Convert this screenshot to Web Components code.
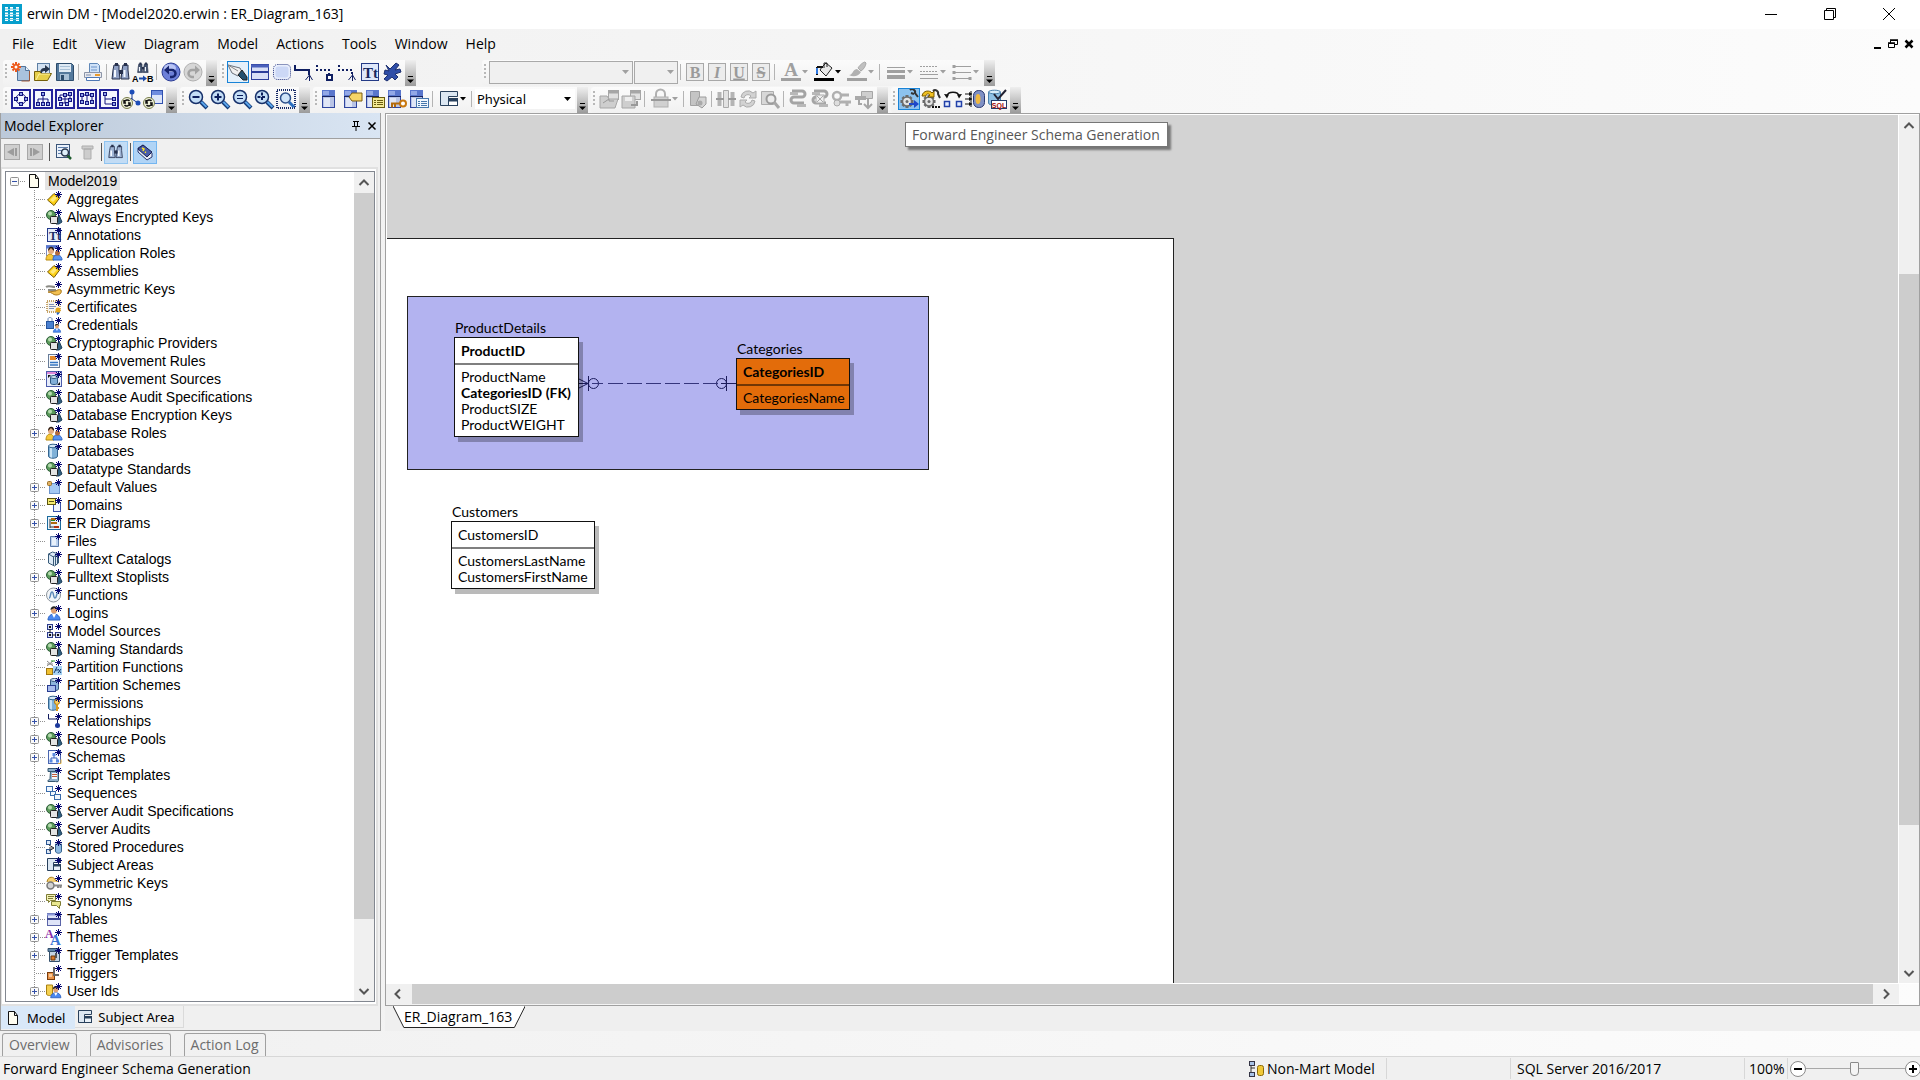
<!DOCTYPE html>
<html lang="en">
<head>
<meta charset="utf-8">
<title>erwin DM - [Model2020.erwin : ER_Diagram_163]</title>
<style>
  :root {
    --ui: "Open Sans", "Noto Sans", sans-serif;
    --tree: "Liberation Sans", sans-serif;
    --er: Lato, "Open Sans", sans-serif;
    --tab: "Noto Sans", sans-serif;
  }
  html, body { height: 100%; margin: 0; }
  body { font: 14px/20px var(--ui); color: #000; background: #f0f0f0; overflow: hidden; }
</style>
</head>
<body>
<erwin-app></erwin-app>
<script>
/* ---------- icon drawings ---------- */
const STAR = '<path d="M12.5 0v7M9 3.5h7M10 1l5 5M15 1l-5 5" stroke="#06066e" fill="none"/>';
const SHAPES = '<circle cx="5" cy="6" r="4.5" fill="#5a9a5a" stroke="#2c5a38"/><circle cx="4" cy="4.500" r="2" fill="#b5dcae"/><path d="M13 6l3 7-3 2h-3z" fill="#2f5f80" stroke="#1c3c58"/><rect x="4.500" y="7.500" width="7" height="7" rx="1" fill="#e4e4e4" stroke="#222"/>';
const TAG = '<path d="M1.500 9L8 2.500l6 4L8 14.500z" fill="#fcd116" stroke="#7a5a00"/><path d="M4 9l4-4 3 2-4 4z" fill="#ffe97a"/>';
const PERSON = '<path d="M2 15c0-4 3-6 6-6s6 2 6 6z" fill="#4a88f0" stroke="#2a60c0"/><path d="M6 9l2 4 2-4z" fill="#fff"/><circle cx="8" cy="5.500" r="3" fill="#e0a070"/><path d="M4.500 5c0-5 7-5 7 0l-3-2z" fill="#222"/>';
const PEOPLE = '<path d="M0 15c0-4 2-6 4-6s4 2 4 6z" fill="#f7c93a" stroke="#b88a10"/><path d="M7 15c0-4 2-5 4-5s5 1 5 5z" fill="#5b93ee" stroke="#2b62c4"/><circle cx="5" cy="6" r="3" fill="#e5ad80"/><path d="M2 6c0-6 7-5 6 0L5 3z" fill="#2b1a10"/><circle cx="11.500" cy="8" r="2.500" fill="#b36a3c"/>';
const CYL = '<path d="M2.500 3v10c0 3 9 3 9 0V3z" fill="#7fb1d8" stroke="#34648e"/><path d="M4 4v10l2 .8V5z" fill="#c8e2f4"/><ellipse cx="7" cy="3" rx="4.500" ry="1.800" fill="#d4e8f6" stroke="#34648e"/>';
const SQ = inner => `<rect x="1" y="1" width="18" height="18" fill="#f4f7ff" stroke="#23239a" stroke-width="2"/><g fill="#fff" stroke="#14147e">${inner}</g>`;
const node = (x, y) => `<rect x="${x}.5" y="${y}.5" width="3" height="3" fill="#8ea2ea"/>`;
const LENS = inner => `<path d="M13 13l6 6" stroke="#123a78" stroke-width="4"/><path d="M13 12.500l5.500 5.500" stroke="#5aa4ea" stroke-width="2"/><circle cx="8" cy="8" r="6.500" fill="#c4def6" stroke="#16306a" stroke-width="1.500"/><g stroke="#0c1e5c" fill="none" stroke-width="2">${inner}</g>`;
const TBL = '<rect x="1.500" y="1.500" width="12" height="17" fill="#b9c4e6" stroke="#2f459e"/><path d="M3 9h6v9H3z" fill="#e0e6f6"/><rect x="1" y="1" width="13" height="6" fill="#5a76cc"/><path d="M1 7.500h13" stroke="#17235e"/><path d="M2 2h6v4H2z" fill="#93a8e6"/>';
const STAMP = '<circle cx="6" cy="14" r="5.500" fill="#eef0d8" stroke="#777c4a"/><path d="M3.500 13a3 3 0 0 1 5-1M8.500 15a3 3 0 0 1-5 1M3 11v3h2M9 17v-3H7" stroke="#111" fill="none" stroke-width="1.500"/>';
const GLASSES = c => `<g fill="${c}" stroke="#26304c"><path d="M3 3h5v5l1 9H1l1-9z"/><path d="M12 3h5v5l1 9h-8l1-9z"/></g><path d="M8 8h4v4H8z" fill="#26304c"/><path d="M4 1h3v3H4zM13 1h3v3h-3z" fill="#26304c"/><path d="M4 8v7M13.500 8v7" stroke="#f4f8ff" stroke-width="2"/>`;
const GEAR = c => `<path d="M8 6v13M1.500 12.500h13M3.500 8l9 9M12.500 8l-9 9" stroke="${c}" stroke-width="3"/><circle cx="8" cy="12.500" r="4.500" fill="#e4e4e4" stroke="${c}" stroke-width="1.500"/><circle cx="8" cy="12.500" r="1.500" fill="${c}"/>`;
const letter = (t, extra = '') => `<rect x="1.500" y="1.500" width="17" height="17" fill="#ececec" stroke="#a8a8a8"/><text x="10" y="15.500" text-anchor="middle" font-family="Liberation Serif" font-size="16" font-weight="bold" fill="#9a9a9a" ${extra}>${t}</text>`;
const GTBL = (x, y) => `<rect x="${x}.5" y="${y}.5" width="10" height="9" fill="#e0e0e0" stroke="#a6a6a6"/><path d="M${x} ${y + 2}h11" stroke="#a6a6a6" stroke-width="3"/>`;
const CHAIN = '<path d="M4 2h10a3 3 0 0 1 0 6H6a3 3 0 0 0 0 6h10" stroke="#a4a4a4" stroke-width="3" fill="none"/><path d="M2 4.500h8M9 16.500h9" stroke="#b8b8b8" stroke-width="3"/>';
const SUBJ = '<path d="M1.500 13.500v-12h13v4h-7v8z" fill="#dce7f2" stroke="#28405c"/><rect x="7.500" y="7.500" width="7" height="6" fill="#eaf1f8" stroke="#28405c"/><path d="M7 8.500h8" stroke="#28405c" stroke-width="2"/>';

const ICONS = {
  logo: [20, '<rect width="20" height="20" fill="#079fcc"/><g fill="#fff"><path d="M3 5h14v1H3zM3 10h14v1H3zM3 15h14v1H3z" opacity=".75"/><path d="M3 3h3v4H3zM8 3h3v4H8zM14 3h3v4h-3zM3 8.500h3v4H3zM8 8.500h3v4H8zM14 8.500h3v4h-3zM3 14h3v3H3zM8 14h3v3H8zM14 14h3v3h-3z"/></g><path d="M3 5h14M3 10.500h14M3 15.500h14" stroke="#079fcc" stroke-width=".6"/>'],
  neu: [20, '<path d="M6.500 4.500h8l4 4v10h-12z" fill="#a9c3de" stroke="#51749c"/><path d="M14.500 4.500v4h4" fill="#e8f1fa" stroke="#51749c"/><path d="M18.500 9v10h-8" stroke="#a05a3c" fill="none"/><path d="M5 0v10M0 5h10M1.500 1.500l7 7M8.500 1.500l-7 7" stroke="#ee5a1c" stroke-width="2"/><circle cx="5" cy="5" r="1.500" fill="#fff"/>'],
  open: [20, '<rect x="4.500" y="1.500" width="12" height="12" fill="#d3e2f2" stroke="#5e7fa4"/><path d="M7 12c0-5 2-6 5-6V3l5 4-5 4V9c-3 0-3 1-3 3z" fill="#27364c"/><path d="M1.500 10v8.500h13l4-7H8l-1-2H1.500z" fill="#e6cf4a" stroke="#75600a"/><path d="M3 18l3-6h11" stroke="#fff3a0" fill="none"/>'],
  save: [20, '<path d="M1.500 1.500h15l2 2v15h-17z" fill="#54799c" stroke="#2d4c6c"/><path d="M4 2h12v8H4z" fill="#dfeaf4"/><path d="M5 12h9v6H5z" fill="#a8c0d6"/><path d="M6 13h3v5H6z" fill="#2d4c6c"/><path d="M5 4.500h10M5 7.500h10" stroke="#a8c0d6"/>'],
  print: [20, '<path d="M6.500 1.500h8l2 2v8h-10z" fill="#cfe2f8" stroke="#6088b8"/><path d="M8 5h6M8 8h6" stroke="#6a92c8"/><path d="M1.500 10.500h17v5h-17z" fill="#e9eaee" stroke="#8c95a8"/><path d="M3.500 15.500h13v3h-13z" fill="#fff" stroke="#4f78b4"/><path d="M12 13h5" stroke="#e89a2c" stroke-width="2"/><path d="M3 13h5" stroke="#7c8cab"/>'],
  find: [20, GLASSES('#8fa0c4')],
  replace: [20, '<g transform="translate(4 0) scale(.62)">' + GLASSES('#42526e') + '</g><g font-family="Liberation Sans" font-size="9" font-weight="bold" fill="#000"><text x="-1" y="20">A</text><text x="14" y="20">B</text></g><path d="M6 16.500h5" stroke="#1c4aa8" stroke-width="2"/><path d="M10 13.500l4 3-4 3z" fill="#1c4aa8"/>'],
  undo: [20, '<circle cx="10" cy="10" r="9" fill="#6d80d8" stroke="#2b3c94"/><ellipse cx="9" cy="6" rx="6" ry="4" fill="#b9c4f4"/><path d="M5 8h6a3.500 3.500 0 0 1 0 7H9" stroke="#17246e" stroke-width="2.500" fill="none"/><path d="M8 3.500v9L3 8z" fill="#17246e"/>'],
  redo: [20, '<circle cx="10" cy="10" r="9" fill="#d6d6d6" stroke="#b0b0b0"/><path d="M15 8H9a3.500 3.500 0 0 0 0 7h2" stroke="#a2a2a2" stroke-width="2.500" fill="none"/><path d="M12 3.500v9L17 8z" fill="#a2a2a2"/>'],
  pointer: [20, '<path d="M0 3l5 7 7 5 1-6z" fill="#8d98a8"/><path d="M0 3l12 3 2 4-4 4-6-3z" fill="#f0f0f0" stroke="#6a707a"/><path d="M0 3l10 6" stroke="#888"/><path d="M10 13l4-5 5 7v3h-4z" fill="#24506f" stroke="#222"/>'],
  entity: [20, '<rect x="1.500" y="2.500" width="17" height="15" fill="#d8dff6" stroke="#2c3e9a"/><path d="M1 4h18" stroke="#4a60bc" stroke-width="3"/><path d="M1 10h18" stroke="#2c3e9a" stroke-width="2"/>'],
  view: [20, '<rect x="1.500" y="2.500" width="17" height="15" rx="4" fill="#e8eefc" stroke="#24347e" stroke-dasharray="1 1"/><rect x="3.500" y="4.500" width="13" height="11" rx="3" fill="#ccd8f6"/>'],
  rel1: [20, '<path d="M1 3v5h14v5" stroke="#101f62" stroke-width="2" fill="none"/><path d="M15.500 12v7M15.500 13l-4 5M15.500 13l3 5" stroke="#101f62" fill="none"/>'],
  rel2: [20, '<path d="M1 3v5h12v5" stroke="#101f62" stroke-width="2" stroke-dasharray="2 2" fill="none"/><rect x="11" y="13" width="5" height="5" fill="#fff" stroke="#101f62" stroke-width="2"/>'],
  rel3: [20, '<path d="M1 3v5h13v5" stroke="#101f62" stroke-width="2" stroke-dasharray="2 2" fill="none"/><path d="M14.500 12v7M14.500 13l-4 5M14.500 13l3 5" stroke="#101f62" fill="none"/>'],
  text: [20, '<rect x="1.500" y="1.500" width="17" height="17" fill="#dfe8fa" stroke="#243a86"/><text x="3" y="15.500" font-family="Liberation Serif" font-size="15" font-weight="bold" fill="#16275e">Tt</text>'],
  ink: [20, '<path d="M4 3l4 4 6-6 3 2-4 5 5-1 1 3-6 2 3 3-3 3-3-3-5 4-3-2 4-4-4-1 1-4 4 1z" fill="#2f4ea8" stroke="#1c3070"/>'],
  bold: [20, letter('B')], ital: [20, letter('I', 'font-style="italic"')], under: [20, letter('U', 'text-decoration="underline"')], strike: [20, letter('S', 'text-decoration="line-through"')],
  fontc: [20, '<text x="10" y="14" text-anchor="middle" font-family="Liberation Serif" font-size="19" font-weight="bold" fill="#a0a0a0">A</text><path d="M0 17.500h20" stroke="#a0a0a0" stroke-width="3"/>'],
  fill: [20, '<path d="M8 5l4-4 6 5-6 8-6-6z" fill="#e8e8e8" stroke="#222"/><path d="M10 6V1h3v4" fill="none" stroke="#222"/><path d="M3 5h6M3 5v8" stroke="#111" stroke-width="2"/><path d="M3 6v6" stroke="#2f78e0" stroke-width="2"/><path d="M0 17.500h20" stroke="#000" stroke-width="3"/>'],
  brush: [20, '<path d="M18 0c-2 0-6 4-7 6l3 3c2-1 5-5 5-8z" fill="#c0c0c0" stroke="#aaa"/><path d="M2 13c4 0 3-5 8-6l4 3c-3 5-8 5-12 3z" fill="#b0b0b0"/><path d="M0 17.500h20" stroke="#a0a0a0" stroke-width="3"/>'],
  lw: [20, '<path d="M1 5.500h18" stroke="#a0a0a0"/><path d="M1 9.500h18" stroke="#a0a0a0" stroke-width="3"/><path d="M1 15h18" stroke="#a0a0a0" stroke-width="4"/>'],
  ls: [20, '<path d="M1 4.500h18M1 9.500h18" stroke="#a0a0a0" stroke-dasharray="2 1"/><path d="M1 12.500h18M1 16.500h18" stroke="#a0a0a0"/>'],
  lc: [20, '<path d="M2 4.500h17M2 10.500h17M2 16.500h17" stroke="#a0a0a0"/><path d="M2 3v3M2 9v3M2 15v3M18 15v3" stroke="#a0a0a0" stroke-width="3"/>'],
  lay1: [20, SQ('<circle cx="10" cy="10" r="5" fill="none"/>' + node(8, 3) + node(8, 13) + node(3, 8) + node(13, 8))],
  lay2: [20, SQ('<path d="M10 6v4M5 14v-4h10v4M10 10v4" fill="none"/>' + node(8, 3) + node(3, 13) + node(8, 13) + node(13, 13))],
  lay3: [20, SQ('<path d="M5 6h10v5M10 6v8H5M5 6v4h10" fill="none"/>' + node(8, 4) + node(3, 8) + node(13, 3) + node(13, 9) + node(4, 13) + node(10, 13))],
  lay4: [20, SQ('<path d="M5 12V6h10v6M10 6v6" fill="none"/>' + node(3, 4) + node(8, 3) + node(13, 4) + node(3, 11) + node(8, 12) + node(13, 11))],
  lay5: [20, SQ('<path d="M6 6v9h8M6 10h8" fill="none"/>' + node(4, 3) + node(13, 8) + node(13, 13))],
  auto1: [20, '<path d="M11 3v7l6 4M11 9l-5 4" stroke="#1b3a90" fill="none"/><circle cx="11" cy="3" r="2.500" fill="#1d4db8"/><circle cx="17" cy="14" r="2.500" fill="#1d4db8"/>' + STAMP],
  auto2: [20, '<rect x="8.500" y="1.500" width="11" height="13" fill="#dde5fa" stroke="#3050ae"/><path d="M9 4h10" stroke="#6f8ce0" stroke-width="4"/>' + STAMP],
  zout: [20, LENS('<path d="M4.500 8h7"/>')], zin: [20, LENS('<path d="M4.500 8h7M8 4.500v7"/>')],
  zeq: [20, LENS('<path d="M5 6.500h6M5 9.500h6" stroke-width="1"/>')], zfit: [20, LENS('<path d="M3.500 8h9M8 3.500v9" stroke-dasharray="3 1.500"/>')],
  zsel: [20, '<rect x="1" y="1" width="18" height="18" fill="none" stroke="#1a2c68" stroke-width="2" stroke-dasharray="1 1"/><path d="M13 13l5 5" stroke="#2a6ec0" stroke-width="3"/><circle cx="9.500" cy="9" r="5" fill="#cfe4f8" stroke="#2c4f8a" stroke-width="1.500"/>'],
  t1: [20, TBL], t2: [20, TBL + '<path d="M6 8l3-4h10v8H9z" fill="#f6d568" stroke="#7c5c10"/>'],
  t3: [20, TBL + '<rect x="7.500" y="8.500" width="12" height="10" fill="#f4ea94" stroke="#6a5c10"/><path d="M9 11.500h2M12 11.500h6M9 13.500h2M12 13.500h6M9 15.500h2M12 15.500h6" stroke="#6a5c10"/>'],
  t4: [20, TBL + '<circle cx="16" cy="14.500" r="3" fill="#fff" stroke="#c87810" stroke-width="2"/><path d="M13 14.500H5v4M8 15v3" stroke="#b36a0c" stroke-width="2" fill="none"/>'],
  t5: [20, TBL + '<rect x="7.500" y="9.500" width="12" height="9" fill="#f2f8ff" stroke="#4878ac"/><path d="M9 12.500h2M12 12.500h6M9 14.500h2M12 14.500h6M9 16.500h2M12 16.500h6" stroke="#4878ac"/>'],
  subj: [20, '<path d="M1.500 16.500v-14h17v5h-9v9z" fill="#dce7f2" stroke="#28405c"/><rect x="9.500" y="9.500" width="9" height="7" fill="#fff" stroke="#28405c"/><path d="M9 11h10" stroke="#28405c" stroke-width="3"/>'],
  g1: [20, GTBL(9, 1) + '<path d="M1 7h7l2 3h9l-3 9H1z" fill="#cecece" stroke="#a6a6a6"/><path d="M4 14l6-4v2h5" stroke="#999" fill="none"/>'],
  g2: [20, GTBL(9, 1) + '<path d="M1 7h13v12H1z" fill="#cecece" stroke="#a6a6a6"/><path d="M16 12v4h-6" stroke="#999" fill="none" stroke-width="2"/><path d="M4 8h7v4H4z" fill="#eee"/>'],
  lock: [20, '<path d="M5 8V5a4 4 0 0 1 9 0v3" fill="none" stroke="#b0b0b0" stroke-width="2"/><rect x="3" y="8" width="14" height="10" fill="#d0d0d0" stroke="#b0b0b0"/><path d="M0 11h20" stroke="#999" stroke-width="2"/>'],
  g3: [20, '<path d="M2.500 2.500h9v14h-9z" fill="#c4c4c4" stroke="#a2a2a2"/><path d="M11 8h7v7l-4 4-6-4z" fill="#d4d4d4" stroke="#9c9c9c"/><circle cx="12" cy="14" r="2.500" fill="#aaa"/>'],
  g4: [20, '<path d="M7.500 1.500h5v17h-5z" fill="#e2e2e2" stroke="#aaa"/><path d="M3.500 3v14M16.500 3v14" stroke="#b4b4b4" stroke-width="4"/><path d="M0 10h8M12 10h8" stroke="#999" stroke-width="2"/>'],
  g5: [20, '<path d="M3 8a7 7 0 0 1 12-4l3-2v7h-7l2-2a4 4 0 0 0-7 2zM17 12a7 7 0 0 1-12 4l-3 2v-7h7l-2 2a4 4 0 0 0 7-2z" fill="#d2d2d2" stroke="#acacac"/>'],
  g6: [20, '<path d="M1.500 2.500h12v13h-12z" fill="#d8d8d8" stroke="#adadad"/><circle cx="11" cy="10" r="4.500" fill="#ececec" stroke="#9c9c9c" stroke-width="2"/><path d="M14 13l5 6" stroke="#a8a8a8" stroke-width="3"/>'],
  c1: [20, CHAIN], c2: [20, CHAIN + '<rect x="6" y="6" width="8" height="8" fill="#eee" stroke="#aaa"/><path d="M7 7l6 6M13 7l-6 6" stroke="#aaa"/>'],
  c3: [20, '<circle cx="5" cy="7" r="4" fill="none" stroke="#b0b0b0" stroke-width="2.500"/><path d="M9 6h8M8 13h11M15 13v4" stroke="#b0b0b0" stroke-width="3"/><circle cx="5" cy="14" r="3" fill="#ddd" stroke="#aaa"/>'],
  c4: [20, '<path d="M7.500 2.500h11v7h-11z" fill="#cfcfcf" stroke="#a6a6a6"/><path d="M1 7h11v4H1z" fill="#aaa"/><path d="M5 11v4h3M14 9v9M10 15l4 4 4-4" stroke="#a6a6a6" stroke-width="2" fill="none"/>'],
  fe: [20, GEAR('#6b6b6b') + '<path d="M11 1a3 3 0 0 1 5 3l3 4M12 4l3 1" stroke="#333" stroke-width="2" fill="none"/><path d="M10 14h5v-3l5 4-5 4v-3h-5z" fill="#1e48c8"/>'],
  re: [20, GEAR('#6b6b6b') + '<path d="M1 7c1-6 8-6 10-3l2-2v6H7l2-2c-2-2-4-1-4 1z" fill="#f0c020" stroke="#7a5a00"/><path d="M12 2a3 3 0 0 1 5 3l2 4" stroke="#333" stroke-width="2" fill="none"/><path d="M11 17h2v2h-2zM14 17h2v2h-2zM17 17h2v2h-2z" fill="#111"/>'],
  cmp: [20, '<path d="M4 7c1-5 11-5 12 0" stroke="#111" stroke-width="1.500" fill="none"/><path d="M1 5l5 .5-2 4zM19 5l-5 .5 2 4z" fill="#111"/><rect x="1.500" y="12.500" width="5" height="5" fill="#e3ecff" stroke="#2140a8" stroke-width="1.500"/><rect x="13.500" y="12.500" width="5" height="5" fill="#e3ecff" stroke="#2140a8" stroke-width="1.500"/>'],
  bridge: [20, '<path d="M0 5h7M0 10h7M0 15h7M6 2v16" stroke="#111"/><path d="M4 3l3 2-3 2zM4 8l3 2-3 2zM4 13l3 2-3 2z" fill="#111"/><rect x="8.500" y="1.500" width="11" height="17" rx="5" fill="#7f90c4" stroke="#2a3870"/><ellipse cx="13" cy="10" rx="2.500" ry="5" fill="#f0b840"/>'],
  sql: [20, '<path d="M1.500 3v11c0 3 12 3 12 0V3z" fill="#8fc0e4" stroke="#4a80ac"/><ellipse cx="7.500" cy="3" rx="6" ry="1.800" fill="#d8ecf9" stroke="#4a80ac"/><path d="M7 5l4 5 8-9" stroke="#223" stroke-width="2" fill="none"/><rect x="4.500" y="11.500" width="15" height="8" fill="#fff" stroke="#223a6a"/><text x="12" y="18.500" text-anchor="middle" font-family="Liberation Sans" font-size="7" font-weight="bold" fill="#a00808">SQL</text>'],
  back: [16, '<rect x=".5" y=".5" width="15" height="15" fill="#cfcfcf" stroke="#a8a8a8"/><path d="M10 4v8L3 8zM11 4h2v8h-2z" fill="#9c9c9c"/>'],
  fwd: [16, '<rect x=".5" y=".5" width="15" height="15" fill="#cfcfcf" stroke="#a8a8a8"/><path d="M6 4v8l7-4zM3 4h2v8H3z" fill="#9c9c9c"/>'],
  props: [16, '<rect x=".5" y=".5" width="13" height="13" fill="#eaf1fb" stroke="#3a5478"/><path d="M2 3.500h10M2 6.500h4M2 9.500h3" stroke="#5c7ca8"/><path d="M11 11l4 4" stroke="#1c5a2c" stroke-width="2.500"/><circle cx="9" cy="8.500" r="3.500" fill="#dff0fb" stroke="#27364c" stroke-width="1.500"/>'],
  del: [16, '<path d="M3 2h11v3H3zM5 5h7v10H5z" fill="#cdcdcd" stroke="#adadad"/>'],
  find16: [16, '<g transform="scale(.8)">' + GLASSES('#9fb4d4') + '</g>'],
  book: [16, '<path d="M1 8V4l5-3 9 8v4l-5 3z" fill="#e8ecf8" stroke="#27346e"/><path d="M1 5l5-4 9 7-5 5z" fill="#4a5ca8" stroke="#1a2450"/><path d="M5 4l2 1-1 2M8 8l1 .6" stroke="#ffe620" stroke-width="1.500" fill="none"/>'],
  pin: [10, '<path d="M2 .5h6M3.500 0v5M6.500 0v5M1 5.500h8M5 6v4" stroke="#000" fill="none"/>'],
  close: [10, '<path d="M1.500 1.500l7 7M8.500 1.500l-7 7" stroke="#000" stroke-width="1.500"/>'],
  wmin: [14, '<path d="M1 7.500h12" stroke="#000"/>'],
  wmax: [14, '<path d="M1.500 3.500h9v9h-9zM3.500 3V1.500h9v9H11" stroke="#000" fill="none"/>'],
  wclose: [14, '<path d="M1 1l12 12M13 1L1 13" stroke="#000"/>'],
  mmin: [10, '<path d="M2 9h7" stroke="#000" stroke-width="2"/>'],
  mmax: [10, '<path d="M.5 4.500h6v4h-6zM2.500 4V1.500h7v4H7" stroke="#000" fill="none"/><path d="M0 4h7M2 1h8" stroke="#000" stroke-width="1.500"/>'],
  mclose: [10, '<path d="M1.500 1.500l7 7M8.500 1.500l-7 7" stroke="#000" stroke-width="2.500"/>'],
  mart: [18, '<path d="M3 5v8h4" stroke="#333" fill="none"/><rect x="1.500" y="1.500" width="5" height="4" fill="#a8c4e8" stroke="#334"/><rect x="1.500" y="12.500" width="5" height="4" fill="#a8c4e8" stroke="#334"/><path d="M3 8h4" stroke="#333"/><rect x="9.500" y="5.500" width="6" height="10" rx="2" fill="#f0c838" stroke="#8a6a08"/>'],
  doc: [16, '<path d="M3.500 1.500h6l3 4v9h-9z" fill="#fffdf0" stroke="#111"/><path d="M9.500 1.500v4h3" fill="none" stroke="#111"/>'],
  tag: [16, TAG + STAR], shapes: [16, SHAPES + STAR],
  annot: [16, '<rect x="1.500" y="1.500" width="13" height="13" fill="#e4ecfa" stroke="#22398a"/><text x="3" y="13" font-family="Liberation Serif" font-size="12" font-weight="bold" fill="#1a2c66">Tt</text>' + STAR],
  roles: [16, '<rect x=".5" y=".5" width="11" height="10" fill="#fff" stroke="#7c8cc4"/><path d="M0 2h11" stroke="#5576d0" stroke-width="3"/>' + PEOPLE + STAR],
  people: [16, PEOPLE + STAR],
  akey: [16, '<path d="M0 6c3-2 5 0 9 0M2 9h8" stroke="#8a8a84" stroke-width="2"/><path d="M2 11c4 0 5 3 8 3 4 0 6-2 5-5-2-1-4 0-5 1z" fill="#f2c052" stroke="#a9781c"/>' + STAR],
  cert: [16, '<rect x="1" y="2" width="13" height="11" fill="#f8f4ea" stroke="#c6a468" stroke-width="2" stroke-dasharray="1 1"/><path d="M3 5.500h5M3 7.500h7M3 9.500h5" stroke="#7f90b8"/><path d="M10 11l1 5 2-1 1-4z" fill="#2a68c8"/><circle cx="12" cy="11" r="2.500" fill="#e8a818"/>' + STAR],
  cred: [16, '<path d="M2 4V2c0-2 4-2 4 0v2" stroke="#6a86b4" fill="none"/><rect x=".5" y="4.500" width="7" height="7" fill="#4a80d0" stroke="#24539c"/><g transform="translate(6 6) scale(.62)">' + PERSON + '</g>' + STAR],
  rules: [16, '<rect x="2.500" y="1.500" width="11" height="13" fill="#f4f8fc" stroke="#687c98"/><path d="M4 3h6v4H4z" fill="#e58a2a"/><path d="M4 9.500h8M4 12h8" stroke="#3474c0" stroke-width="1.500"/>' + STAR],
  dms: [16, '<rect x=".5" y=".5" width="15" height="15" fill="#e6ecfa" stroke="#4c5cac"/><path d="M1 2h10" stroke="#e088d8" stroke-width="2"/><path d="M4.500 6v6c0 2 7 2 7 0V6z" fill="#84b0d8" stroke="#2f5880"/><ellipse cx="8" cy="6" rx="3.500" ry="1.500" fill="#d4e6f4" stroke="#2f5880"/><path d="M2 7V4h3zM14 11v3h-3z" fill="#111"/>' + STAR],
  db: [16, CYL + STAR],
  defv: [16, '<rect x="3.500" y="4.500" width="10" height="10" fill="#a4c8f2" stroke="#6b94cc"/><rect x="1.500" y="2.500" width="4" height="4" rx="1" fill="#e0b060" stroke="#9a7028"/>' + STAR],
  dom: [16, '<rect x="7.500" y="5.500" width="7" height="9" fill="#eef3fd" stroke="#3a52aa"/><rect x="1.500" y="1.500" width="8" height="6" fill="#f4ea70" stroke="#5c5410"/><path d="M3 4.500h5" stroke="#5c5410"/>' + STAR],
  erd: [16, '<rect x="1.500" y="1.500" width="13" height="13" fill="#e9f3fb" stroke="#1a6a9c"/><path d="M4 4v9M4 12h5" stroke="#333"/><path d="M5 3h5v2H5zM5 7h6v2H5z" fill="#b06a10"/><path d="M8 11h5v2H8z" fill="#b03010"/><path d="M5 5h4v1H5z" fill="#2a8a2a"/>' + STAR],
  file: [16, '<path d="M4.500 3.500h8v10h-8z" fill="#bcd2ee" stroke="#5878a8"/><path d="M6 5h4v7H6z" fill="#e8f1fb"/>' + STAR],
  cat: [16, '<path d="M2.500 3l4-2 6 2v9l-4 3-6-3z" fill="#dceaf6" stroke="#385a78"/><path d="M2.500 3l5 3v9M9.500 5v9M11.500 4v9M7 6l5-3" stroke="#385a78" fill="none"/>' + STAR],
  func: [16, '<circle cx="7.500" cy="8" r="7" fill="#f2f5f8" stroke="#8c949c"/><path d="M3 11c2 0 1-6 3-6s1 6 3 6 1-5 3-5" stroke="#5c88b8" stroke-width="1.500" fill="none"/>' + STAR],
  person: [16, PERSON + STAR],
  msrc: [16, '<g fill="#d8e0f6" stroke="#2c3c8c"><rect x="1.500" y="1.500" width="5" height="5"/><rect x="1.500" y="9.500" width="5" height="5"/><rect x="9.500" y="9.500" width="5" height="5"/></g><path d="M3 3h2v2H3zM3 11h2v2H3zM11 11h2v2h-2z" fill="#111"/><path d="M4 6v4M6 12h4" stroke="#111"/>' + STAR],
  pfun: [16, '<path d="M1 2l6 5M1 7l6-5M1 5h6" stroke="#888"/><rect x=".5" y="9.500" width="6" height="6" fill="#f0c030" stroke="#a07810"/><rect x="7" y="7" width="9" height="9" fill="#a8d4f4"/><path d="M8 14l3-6M9 11h3M12 14l3-4M12 10l3 4" stroke="#143a70"/><path d="M5 2h4" stroke="#2a9a2a"/>' + STAR],
  psch: [16, '<path d="M4.500 3v9c0 2 8 2 8 0V3z" fill="#8cb4dc" stroke="#31557c"/><ellipse cx="8.500" cy="3" rx="4" ry="1.500" fill="#d8e8f6" stroke="#31557c"/><rect x="1.500" y="8.500" width="8" height="6" fill="#a8bcec" stroke="#283c90"/>' + STAR],
  perm: [16, CYL + '<circle cx="11" cy="7" r="2.500" fill="#fcd060" stroke="#a87410"/><path d="M11 9v7M11 13h2" stroke="#d89a20" stroke-width="2"/>' + STAR],
  rel: [16, '<path d="M2.500 1v5h9v5" stroke="#111a5c" fill="none"/><circle cx="11.500" cy="12.500" r="2.500" fill="#1c3a9c"/>' + STAR],
  schema: [16, '<rect x="2.500" y="1.500" width="12" height="13" fill="#f6f9ff" stroke="#4a66b0"/><path d="M5 12V9h6v3M8 9V6" stroke="#3a62b8" fill="none"/><path d="M6.500 4h3v3h-3zM3.500 10.500h3v3h-3zM10 10.500h3v3h-3z" fill="#5a8ae0"/><path d="M12 14.500h3v-4" stroke="#e0b040" fill="none"/>' + STAR],
  script: [16, '<path d="M2 1.500h10v3H2zM4.500 4.500h8v9c0 2-3 1-3 1H2c-1-2 2-1 2-3z" fill="#8fb0cc" stroke="#34566e"/><path d="M6 6h5v6H6z" fill="#f4f8fb"/><path d="M6 7.500h5M6 9.500h5" stroke="#c05a3a"/>' + STAR],
  seq: [16, '<g fill="#f0f6fd" stroke="#3a6cac"><rect x=".5" y="1.500" width="6" height="5"/><rect x="4.500" y="6.500" width="5" height="4"/><rect x="8.500" y="9.500" width="6" height="5"/></g>' + STAR],
  proc: [16, '<g fill="#dce8f8" stroke="#2c5690"><rect x=".5" y="1.500" width="4" height="4"/><rect x=".5" y="10.500" width="4" height="4"/></g><path d="M3 6l5 3-5 3M3 9h5" stroke="#333" fill="none"/><path d="M9.500 5v7c0 3 6 3 6 0V5z" fill="#8cb8e0" stroke="#34628c"/>' + STAR],
  subj16: [16, SUBJ], subjs: [16, SUBJ + STAR],
  skey: [16, '<path d="M1 7c1-7 8-5 8-2l4 2" fill="#f6d070" stroke="#a87c18"/><circle cx="4.500" cy="10.500" r="3.500" fill="#d2d2d2" stroke="#777" stroke-width="1.500"/><path d="M8 10.500h8M12 11v2M14.500 11v2" stroke="#888" stroke-width="2"/>' + STAR],
  syn: [16, '<path d="M.5 1.500h9v6h-5l-2 2v-2h-2z" fill="#f3f2b8" stroke="#7e7c34"/><path d="M2 3.500h6M2 5.500h5" stroke="#7e7c34"/><path d="M5.500 8.500h9v4h-1v3l-3-3h-5z" fill="#e9e890" stroke="#7e7c34"/>' + STAR],
  tbl: [16, '<rect x="1.500" y="2.500" width="13" height="12" fill="#dfe4f8" stroke="#5a64a8"/><path d="M1 3.500h14" stroke="#8c9ad8" stroke-width="2"/><path d="M1 8h14" stroke="#3c4690" stroke-width="2"/>' + STAR],
  theme: [16, '<g font-family="Liberation Serif" font-weight="bold"><text x="-1" y="9" font-size="12" fill="#8a2ea8">A</text><text x="4" y="16" font-size="15" fill="#3a74d4">A</text></g>' + STAR],
  ttpl: [16, '<path d="M2 1.500h11v3H2z" fill="#5c84a8" stroke="#34506c"/><path d="M3.500 4.500h10v10h-10z" fill="#c4d4e4" stroke="#34506c"/><path d="M5 9h4v4H5z" fill="#d87a2a" stroke="#6a3408"/><path d="M10 6v5" stroke="#555" stroke-width="2"/>' + STAR],
  trig: [16, '<rect x="1.500" y="7.500" width="7" height="7" fill="#e8944a" stroke="#7a3c0c"/><path d="M8 2v8h5" stroke="#666" stroke-width="2" fill="none"/><path d="M3 9h3v3H3z" fill="#f8c898"/>' + STAR],
  user: [16, '<path d="M.5 2v9c0 2 6 2 6 0V2z" fill="#f4d050" stroke="#a88010"/><g transform="translate(3 2) scale(.85)">' + PERSON + '</g>' + STAR],
};

const define = (name, css, html) => customElements.define(name, class extends HTMLElement {
  connectedCallback() {
    if (this.shadowRoot) return;
    const root = this.attachShadow({ mode: 'open' });
    const t = document.createElement('template');
    t.innerHTML = `<style>*{box-sizing:border-box}button{font:inherit;color:inherit;background:none;border:0;padding:0;margin:0}${css}</style>` + (typeof html === 'function' ? html(this) : html);
    root.append(t.content.cloneNode(true));
  }
});
const a = (el, n, d = '') => el.getAttribute(n) ?? d;

define('app-icon', ':host{display:block;flex:none;line-height:0}svg{display:block;overflow:visible}', el => {
  const [s, body] = ICONS[a(el, 'name')] || [16, ''];
  return `<svg width="${s}" height="${s}" viewBox="0 0 ${s} ${s}" fill="none" aria-hidden="true">${body}</svg>`;
});

/* ---------- title bar and menu ---------- */
define('title-bar', `:host{display:flex;align-items:center;height:29px;background:#fff;padding:0 2px 2px;flex:none;box-sizing:border-box}
  h1{font:inherit;margin:0 auto 0 5px;line-height:24px}
  button{width:59px;height:27px;display:grid;place-items:center}`,
  `<app-icon name="logo"></app-icon><h1><slot></slot></h1>
   <button aria-label="Minimize"><app-icon name="wmin"></app-icon></button>
   <button aria-label="Restore"><app-icon name="wmax"></app-icon></button>
   <button aria-label="Close"><app-icon name="wclose"></app-icon></button>`);

define('menu-bar', `:host{display:flex;align-items:center;height:31px;padding:0 6px 2px 3px;flex:none;box-sizing:border-box}
  nav{display:flex;margin-right:auto}nav button{padding:0 9px;line-height:24px}
  .w{display:flex;gap:6px}`,
  el => `<nav>${a(el, 'items').split(',').map(i => `<button>${i}</button>`).join('')}</nav>
   <div class="w"><button aria-label="Minimize diagram"><app-icon name="mmin"></app-icon></button>
   <button aria-label="Restore diagram"><app-icon name="mmax"></app-icon></button>
   <button aria-label="Close diagram"><app-icon name="mclose"></app-icon></button></div>`);

/* ---------- toolbars ---------- */
define('tool-group', `:host{display:flex;height:26px;flex:none;margin-right:3px;background:linear-gradient(#fbfbfb,#f1f1f1);border-radius:3px}
  .grip{width:7px;flex:none;padding:4px 2px}.grip i{display:block;width:2px;height:2px;margin-bottom:2px;background:#b8b8b8}
  .in{display:flex;align-items:center;height:24px}
  .more{width:11px;margin-left:2px;background:linear-gradient(#efefef,#9b9b9b);display:flex;align-items:flex-end;justify-content:center;padding-bottom:2px}`,
  `<span class="grip"><i></i><i></i><i></i><i></i></span><div class="in"><slot></slot></div>
   <button class="more" aria-label="Toolbar options"><svg width="7" height="8" viewBox="0 0 7 8"><path d="M1 .5h5" stroke="#000"/><path d="M0 3.500h7L3.500 7z"/></svg></button>`);
define('tool-sep', ':host{display:block;width:6px;height:16px;background:linear-gradient(#b4b4b4,#b4b4b4) 2px 0/1px 100% no-repeat}', '');
define('tool-button', `:host{display:block}button{display:flex;align-items:center;justify-content:center;height:22px;width:22px}
  :host([drop]) button{width:33px;gap:1px}:host([on]) button{background:#e4f0fa;outline:1px solid #1883d7;outline-offset:-1px}
  :host([on=full]) button{background:#8cc2ee}`,
  el => `<button aria-label="${a(el, 'name')}"><app-icon name="${a(el, 'name')}"></app-icon>${el.hasAttribute('drop') ? `<svg width="6" height="4"><path d="M0 0h6L3 3.500z" fill="${a(el, 'drop') || '#a0a0a0'}"/></svg>` : ''}</button>`);
define('combo-box', `:host{display:grid;align-items:center;height:20px;width:var(--w)}
  select{appearance:none;grid-area:1/1;width:100%;height:100%;border:0;background:#fff;font:13px/18px var(--tab);color:#000;padding:0 20px 0 2px;border-radius:0}
  svg{grid-area:1/1;justify-self:end;margin-right:3px;pointer-events:none}
  :host([off]){height:23px}:host([off]) select{border:1px solid #a9a9a9;background:#f0f0f0;opacity:1}`,
  el => `<select aria-label="${a(el, 'label')}" ${el.hasAttribute('off') ? 'disabled' : ''}><option>${a(el, 'value')}</option></select>
   <svg width="8" height="4"><path d="M0 0h7L3.500 4z" fill="${el.hasAttribute('off') ? '#a0a0a0' : '#000'}"/></svg>`);
const tb = s => s.split(' ').map(n => n === '|' ? '<tool-sep></tool-sep>' : n.endsWith('*') ? `<tool-button name="${n.slice(0, -1)}" on></tool-button>` : n.endsWith('v') ? `<tool-button name="${n.slice(0, -1)}" drop></tool-button>` : `<tool-button name="${n}"></tool-button>`).join('');
define('tool-area', `:host{display:block;flex:none}.row{display:flex;padding-left:3px;height:27px}.row+.row{height:26px}.wide{margin-left:63px}`,
  `<div class="row"><tool-group>${tb('neu open save | print | find replace | undo redo')}</tool-group>
   <tool-group>${tb('pointer* entity view rel1 rel2 rel3 text ink')}</tool-group>
   <tool-group class="wide"><combo-box off label="Font" style="--w:144px;margin-right:1px"></combo-box><combo-box off label="Size" style="--w:44px"></combo-box>${tb('| bold ital under strike | fontcv')}<tool-button name="fill" drop="#000"></tool-button>${tb('brushv | lwv lsv lcv')}</tool-group></div>
   <div class="row"><tool-group>${tb('lay1 lay2 lay3 lay4 lay5 auto1 auto2')}</tool-group>
   <tool-group>${tb('zout zin zeq zfit zsel')}</tool-group>
   <tool-group>${tb('t1 t2 t3 t4 t5 |')}<tool-button name="subj" drop="#000"></tool-button><tool-sep></tool-sep><combo-box label="Model view" value="Physical" style="--w:100px"></combo-box></tool-group>
   <tool-group>${tb('g1 g2 | lockv | g3 | g4 g5 g6 | c1 c2 c3 c4')}</tool-group>
   <tool-group><tool-button name="fe" on="full"></tool-button>${tb('re cmp bridge sql')}</tool-group></div>`);

/* ---------- scroll bars ---------- */
define('scroll-bar', `:host{display:flex;flex-direction:column;width:20px;background:#f0f0f0;flex:none}
  :host([wide]){flex-direction:row;width:auto;height:20px}
  button{flex:none;height:21px;display:grid;place-items:center}:host([wide]) button{height:auto;width:26px}
  .track{flex:1;display:flex;flex-direction:inherit;min-height:0}.before{flex:var(--before,0)}.thumb{flex:var(--thumb,1);background:#cdcdcd}.after{flex:var(--after,0)}
  path{fill:none;stroke:#555;stroke-width:2}`,
  el => { const w = el.hasAttribute('wide');
    const arrow = d => `<svg width="12" height="12" viewBox="0 0 12 12"><path d="${d}"/></svg>`;
    return `<button aria-label="Scroll back">${arrow(w ? 'M7 1.500L2.500 6 7 10.500' : 'M1.500 8L6 3.500 10.500 8')}</button>
     <div class="track"><span class="before"></span><span class="thumb"></span><span class="after"></span></div>
     <button aria-label="Scroll on">${arrow(w ? 'M4 1.500L8.500 6 4 10.500' : 'M1.500 4L6 8.500 10.500 4')}</button>`; });

/* ---------- model explorer ---------- */
define('tree-node', `:host{display:flex;height:18px;align-items:center;font:14px/18px var(--tree);padding-left:24px;flex:none;box-sizing:border-box}
  :host([root]){padding-left:4px}.stub{width:16px;height:18px;flex:none;display:block}svg{display:block}
  .t{padding-left:5px;white-space:nowrap}:host([root]) .t{background:#e3e3e3;padding:0 3px 0 3px;margin-left:3px}`,
  el => { const open = el.hasAttribute('root'), kids = el.hasAttribute('kids');
    const lines = open ? '<path d="M10 9.500h5" stroke="#909090" stroke-dasharray="1 1"/>' : '<path d="M4.500 0v18M6 9.500h10" stroke="#909090" stroke-dasharray="1 1"/>';
    const box = kids || open ? `<rect x=".5" y="5.500" width="8" height="8" rx="1" fill="#fafafa" stroke="#919191"/><path d="M2 9.500h5${open ? '' : 'M4.500 7v5'}" stroke="#3450a8"/>` : '';
    const svg = `<svg width="16" height="18" viewBox="0 0 16 18" fill="none">${lines}${box}</svg>`;
    return (box ? `<button class="stub" aria-label="Toggle">${svg}</button>` : `<span class="stub">${svg}</span>`) + `<app-icon name="${a(el, 'icon')}"></app-icon><span class="t"><slot></slot></span>`; });

const NODES = `tag:Aggregates|shapes:Always Encrypted Keys|annot:Annotations|roles:Application Roles|tag:Assemblies|akey:Asymmetric Keys|cert:Certificates|cred:Credentials|shapes:Cryptographic Providers|rules:Data Movement Rules|dms:Data Movement Sources|shapes:Database Audit Specifications|shapes:Database Encryption Keys|+people:Database Roles|db:Databases|shapes:Datatype Standards|+defv:Default Values|+dom:Domains|+erd:ER Diagrams|file:Files|cat:Fulltext Catalogs|+shapes:Fulltext Stoplists|func:Functions|+person:Logins|msrc:Model Sources|shapes:Naming Standards|pfun:Partition Functions|psch:Partition Schemes|perm:Permissions|+rel:Relationships|+shapes:Resource Pools|+schema:Schemas|script:Script Templates|seq:Sequences|shapes:Server Audit Specifications|shapes:Server Audits|proc:Stored Procedures|subjs:Subject Areas|skey:Symmetric Keys|syn:Synonyms|+tbl:Tables|+theme:Themes|+ttpl:Trigger Templates|trig:Triggers|+user:User Ids`.split('|');

define('model-explorer', `:host{display:flex;flex-direction:column;width:381px;flex:none;border:1px solid #a0a0a0;border-top:0;background:#f0f0f0;box-sizing:border-box;min-height:0}
  header{display:flex;align-items:center;height:26px;padding:0 3px 0 3px;background:linear-gradient(90deg,#bcc9d9,#d9e5f3);border-bottom:1px solid #a0a0a0;flex:none;gap:6px}
  h2{font:inherit;margin:0 auto 0 0}
  .tools{display:flex;align-items:center;height:28px;padding-bottom:2px;flex:none}
  .tools button{width:22px;height:21px;margin-right:1px;display:grid;place-items:center}.tools i{width:1px;height:18px;margin:0 3px 0 2px;background:#555;flex:none}
  .tools .hot{background:#c2dcf5;outline:1px solid #90c4f0}.tools .on{background:#b0d4f6;outline:1px solid #74b6f0}
  .frame{flex:1;display:flex;border:2px solid #e1e1e1;border-left-width:1px;margin-right:2px;background:#fff;padding:2px 1px 2px 3px;min-height:0}
  .box{flex:1;display:flex;border:1px solid #828790;min-height:0}
  .list{flex:1;overflow:hidden;display:flex;flex-direction:column}
  .tabs{display:flex;height:24px;flex:none;font:13px/20px var(--tab)}
  .tabs button{display:flex;align-items:center;gap:6px;padding:0 10px 0 4px;height:23px}.tabs .on{background:#d9e8f8}
  .tabs button+button{border:solid #dadada;border-width:0 1px 1px 0;height:22px;padding:0 8px 0 2px;gap:5px}`,
  `<header><h2>Model Explorer</h2><button aria-label="Pin"><app-icon name="pin"></app-icon></button><button aria-label="Close panel"><app-icon name="close"></app-icon></button></header>
   <div class="tools"><button aria-label="Back"><app-icon name="back"></app-icon></button><button aria-label="Forward"><app-icon name="fwd"></app-icon></button><i></i>
   <button aria-label="Properties"><app-icon name="props"></app-icon></button><button aria-label="Delete"><app-icon name="del"></app-icon></button><i></i>
   <button class="hot" aria-label="Find"><app-icon name="find16"></app-icon></button><i></i>
   <button class="on" aria-label="Help"><app-icon name="book"></app-icon></button></div>
   <div class="frame"><div class="box"><div class="list"><tree-node root icon="doc">Model2019</tree-node>${NODES.map(n => {
     const k = n[0] === '+'; const [i, t] = n.replace('+', '').split(':'); return `<tree-node icon="${i}" ${k ? 'kids' : ''}>${t}</tree-node>`; }).join('')}</div>
   <scroll-bar style="--thumb:726;--after:61"></scroll-bar></div></div>
   <div class="tabs"><button class="on"><app-icon name="doc"></app-icon>Model</button><button><app-icon name="subj16"></app-icon>Subject Area</button></div>`);

/* ---------- diagram ---------- */
define('er-entity', `:host{position:absolute;font:14px/16px var(--er);white-space:nowrap}
  .n{padding-left:1px}.b{margin-top:1px;width:var(--w);background:var(--bg,#fff);border:1px solid #111;box-shadow:4px 5px 0 rgba(0,0,0,.27)}
  .k{padding:5px 0 4px 6px;border-bottom:2px solid rgba(0,0,0,.5)}.r{padding:4px 0 3px 6px}.r div{height:16px}b{font-weight:700}`,
  el => { const f = s => /^\*/.test(s) ? `<b>${s.slice(1)}</b>` : s;
    return `<div class="n">${a(el, 'name')}</div><div class="b"><div class="k">${f(a(el, 'key'))}</div><div class="r">${a(el, 'cols').split(',').map(c => `<div>${f(c)}</div>`).join('')}</div></div>`; });
define('er-link', `:host{position:absolute}svg{display:block}`,
  `<svg width="157" height="16" viewBox="0 0 157 16" fill="none" stroke="#1c1c5c"><path d="M0 7.500h9M0 3l9 4.500L0 12M9.500 0v15M147.500 0v15M142 7.500h15"/><circle cx="14.500" cy="7.500" r="5"/><circle cx="142.500" cy="7.500" r="5"/><path d="M13 7.500h11M29 7.500h113" stroke-dasharray="15 4" stroke="#35357c"/></svg>`);
define('diagram-view', `:host{flex:1;display:flex;flex-direction:column;min-width:0;min-height:0;margin-left:4px}
  .frame{flex:1;display:flex;flex-direction:column;border:1px solid #a0a0a0;min-height:0}
  .mid{flex:1;display:flex;min-height:0;border-top:1px solid #fff}.bot{display:flex;border-top:1px solid #fff;height:22px;flex:none;padding-bottom:1px}
  .canvas{flex:1;position:relative;overflow:hidden;background:#d3d3d3;border-left:1px solid #fff;border-right:1px solid #fff}
  .page{position:absolute;left:-1px;top:123px;width:788px;bottom:-1px;background:#fff;border:1px solid #222;border-left:0;border-bottom:0}
  .area{position:absolute;left:20px;top:181px;width:522px;height:174px;background:#b3b3f0;border:1px solid #222}
  .strip{display:flex;height:25px;flex:none;padding-left:8px;background:#efefef}
  .tab{position:relative;display:block;height:22px;padding:0 13px 0 11px}.tab svg{position:absolute;inset:0;width:100%;height:100%}.tab span{position:relative;line-height:22px}`,
  `<div class="frame"><div class="mid"><div class="canvas"><div class="page"></div><div class="area"></div>
   <er-link style="left:192px;top:261px"></er-link>
   <er-entity style="left:67px;top:205px;--w:125px" name="ProductDetails" key="*ProductID" cols="ProductName,*CategoriesID (FK),ProductSIZE,ProductWEIGHT"></er-entity>
   <er-entity style="left:349px;top:226px;--w:114px;--bg:#e36c0a" name="Categories" key="*CategoriesID" cols="CategoriesName"></er-entity>
   <er-entity style="left:64px;top:389px;--w:144px" name="Customers" key="CustomersID" cols="CustomersLastName,CustomersFirstName"></er-entity></div>
   <scroll-bar style="--before:138;--thumb:551;--after:137"></scroll-bar></div>
   <div class="bot"><scroll-bar wide style="flex:1"></scroll-bar><span style="width:20px"></span></div></div>
   <div class="strip"><button class="tab"><svg viewBox="0 0 134 22" preserveAspectRatio="none"><path d="M0 0l11 21.500h112L134 0z" fill="#fff"/><path d="M0 0l11 21.500h112L134 0" fill="none" stroke="#222"/></svg><span>ER_Diagram_163</span></button></div>`);
define('tool-tip', `:host{position:absolute;left:905px;top:122px;background:#fff;border:1px solid #767676;color:#575757;padding:0 7px 0 6px;line-height:23px;box-shadow:3px 3px 2px #777;white-space:nowrap}`, '<slot></slot>');

/* ---------- bottom ---------- */
define('dock-tabs', `:host{display:flex;height:25px;flex:none;gap:13px;padding:2px 2px 0;align-items:stretch;box-sizing:border-box}
  button{border:1px solid #a0a0a0;border-bottom:0;border-radius:3px 3px 0 0;padding:0 6px;color:#6d6d6d;line-height:22px}`,
  el => a(el, 'items').split(',').map(i => `<button>${i}</button>`).join(''));
define('status-bar', `:host{display:flex;height:24px;flex:none;background:#f0f0f0;border-top:1px solid #d7d7d7;align-items:center;box-sizing:border-box}
  .m{margin:0 auto 0 3px}.c{display:flex;align-items:center;height:21px;border-right:1px solid #d7d7d7;gap:1px}
  .z{display:flex;align-items:center;padding-left:2px;width:133px;margin-right:-1px}
  .z button{width:16px;height:16px;border:1px solid #8a8a8a;border-radius:50%;background:#fff;flex:none;display:grid;place-items:center}
  input{appearance:none;flex:1;min-width:0;height:16px;margin:0;background:linear-gradient(#a8a8a8,#a8a8a8) 0 7px/100% 1px no-repeat}
  input::-webkit-slider-thumb{appearance:none;width:9px;height:14px;background:#f4f4f4;border:1px solid #8a8a8a;border-radius:1px 1px 4px 4px}`,
  `<span class="m"><slot></slot></span><span class="c" style="width:139px"><app-icon name="mart"></app-icon>Non-Mart Model</span>
   <span class="c" style="width:124px"></span><span class="c" style="width:234px;padding-left:6px">SQL Server 2016/2017</span>
   <span class="c" style="width:43px;padding-left:4px"><label for="z">100%</label></span>
   <span class="z"><button aria-label="Zoom out"><svg width="8" height="8"><path d="M0 4h8" stroke="#000" stroke-width="2"/></svg></button><input id="z" type="range" min="0" max="100" value="49"><button aria-label="Zoom in"><svg width="8" height="8"><path d="M0 4h8M4 0v8" stroke="#000" stroke-width="2"/></svg></button></span>`);

define('erwin-app', `:host{display:flex;flex-direction:column;height:100vh;background:linear-gradient(90deg,#f0f0f0,#fcfcfc)}
  main{flex:1;display:flex;min-height:0}`,
  `<title-bar>erwin DM - [Model2020.erwin : ER_Diagram_163]</title-bar>
   <menu-bar items="File,Edit,View,Diagram,Model,Actions,Tools,Window,Help"></menu-bar>
   <tool-area></tool-area>
   <main><model-explorer></model-explorer><diagram-view></diagram-view></main>
   <dock-tabs items="Overview,Advisories,Action Log"></dock-tabs>
   <status-bar>Forward Engineer Schema Generation</status-bar>
   <tool-tip role="tooltip">Forward Engineer Schema Generation</tool-tip>`);
</script>
</body>
</html>
